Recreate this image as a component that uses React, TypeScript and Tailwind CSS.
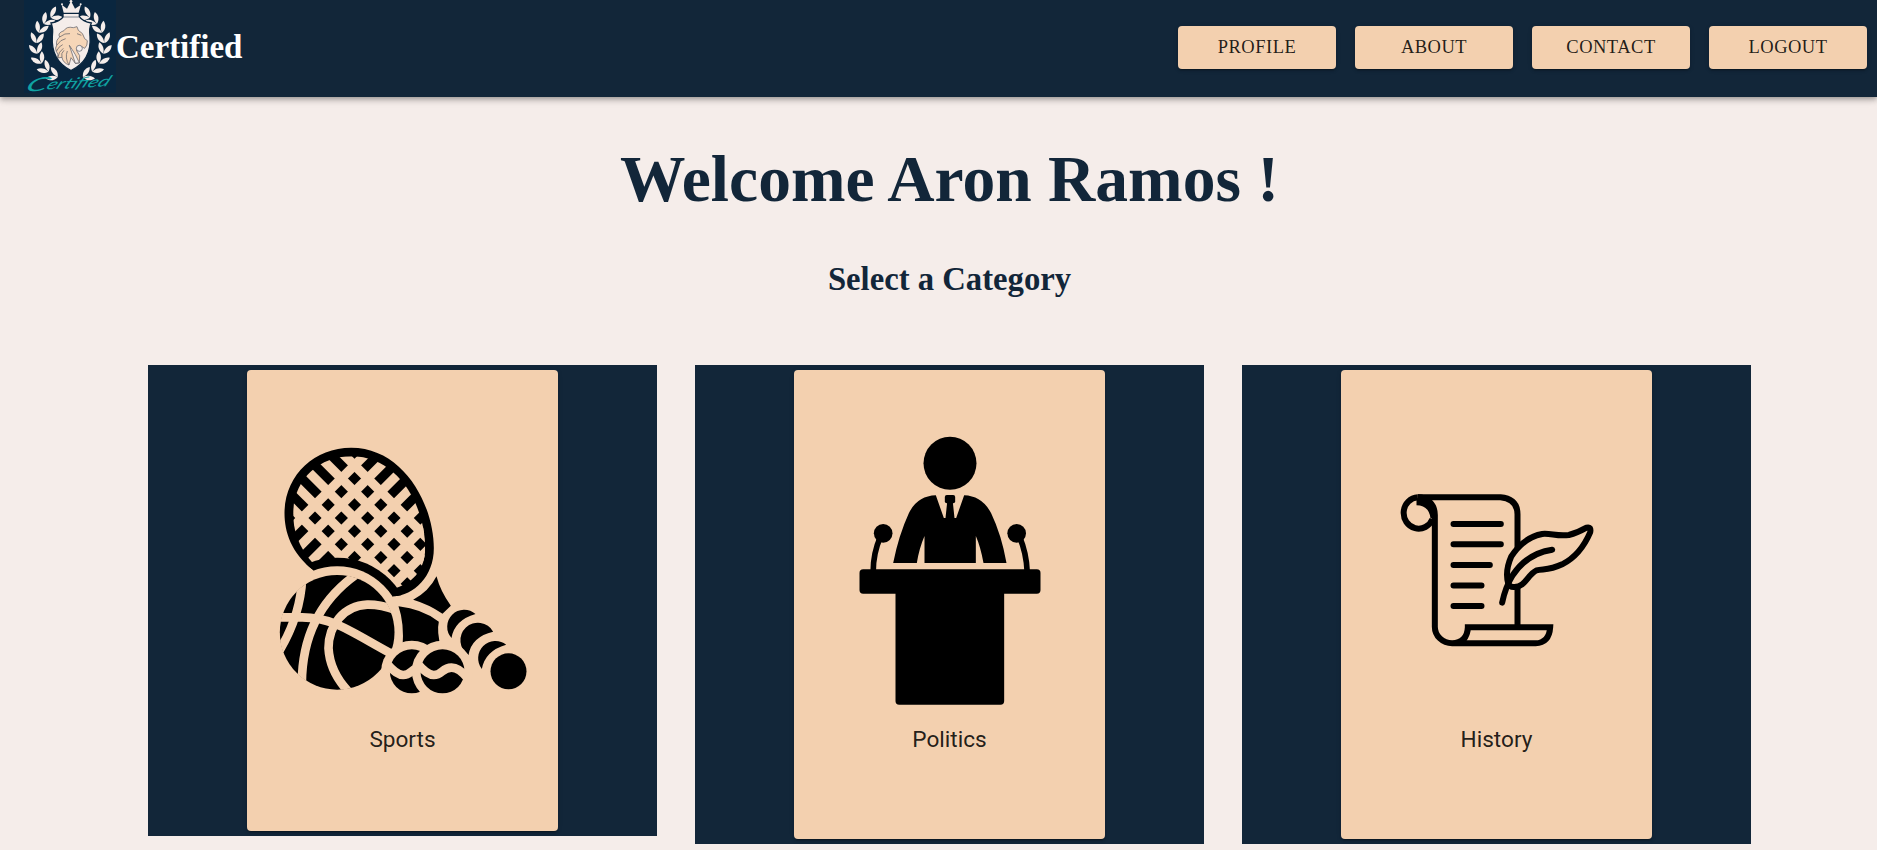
import React from "react";

const stations = [24, 42, 60, 78, 96, 114, 131, 147];

function Branch() {
  return (
    <g>
      {stations.map((a) => (
        <g key={a} transform={`rotate(${a} 151 136) translate(151 238) rotate(-90)`}>
          <path d="M0 4C-14 0 -22 -12 -19 -27C-6 -22 0 -10 0 4Z" />
          <path d="M0 4C14 0 22 -12 19 -27C6 -22 0 -10 0 4Z" />
        </g>
      ))}
    </g>
  );
}

function Logo() {
  return (
    <svg width="92" height="93" viewBox="12 0 276 279" className="shrink-0 overflow-visible">
      <rect x="12" width="276" height="279" fill="#0a263f" />
      <g fill="#f5edea">
        <Branch />
        <g transform="translate(302 0) scale(-1 1)">
          <Branch />
        </g>
        <path
          d="M130 50Q120 65 93 69Q100 82 97 110Q92 180 153 212Q216 180 210 110Q207 82 214 69Q188 65 178 50Z"
          stroke="#0a263f"
          strokeWidth="4"
        />
        <path d="M131 38L125 14L141 26L153 3L165 26L183 14L176 38ZM131 42H176V50H131Z" />
        <circle cx="153" cy="4" r="4" />
        <circle cx="126" cy="13" r="3" />
        <circle cx="182" cy="13" r="3" />
      </g>
      <g stroke="#55565f" strokeWidth="2" strokeLinejoin="round">
        <path
          d="M132 92Q140 78 160 83L171 80L175 91Q190 98 194 116L202 122Q203 137 194 145L180 137Q168 140 170 152L179 167L178 189L166 190L153 173L147 195Q128 188 126 172L113 174Q116 162 109 154Q104 144 110 136Q107 120 119 111Q111 99 132 92Z"
          fill="#f6d6b8"
        />
        <path d="M148 136L166 190L178 188L166 164L156 148Z" fill="#f5edea" />
        <circle cx="178" cy="145" r="9" fill="#f5edea" />
        <path
          d="M119 111Q135 98 150 101M110 136Q122 118 137 116M109 154Q116 139 128 134M113 174Q116 154 130 145M126 172Q122 160 132 151M147 195Q134 174 142 153M171 101L184 106"
          fill="none"
        />
      </g>
      <g
        transform="translate(12 275) rotate(-3) skewX(-30)"
        fill="#10a3a3"
        fontFamily="Lato, 'Liberation Sans', sans-serif"
        fontStyle="italic"
      >
        <text fontSize="56" textLength="64" lengthAdjust="spacingAndGlyphs">
          C
        </text>
        <text x="62" y="-3" fontSize="44" textLength="188" lengthAdjust="spacingAndGlyphs">
          ertified
        </text>
      </g>
    </svg>
  );
}

const fallingStrings = [343, 422, 501, 580, 659, 738, 817];
const risingStrings = [161, 82, 3, -76, -155];
const racketOutline =
  "M128 405C62 355 42 290 42 235C42 122 130 38 242 38C400 38 490 210 490 340C490 425 430 482 368 484L250 560Z";

function SportsIcon() {
  return (
    <svg width="270" height="290" viewBox="-7.500 -30 810 870" className="shrink-0">
      <defs>
        <clipPath id="racket-outer">
          <path d={racketOutline} />
        </clipPath>
        <clipPath id="racket-inner">
          <path d="M130 388C82 335 68 285 68 235C68 135 145 64 242 64C385 64 464 215 464 340C464 400 430 440 385 456L250 500Z" />
        </clipPath>
        <clipPath id="basketball">
          <circle cx="200" cy="592" r="173" />
        </clipPath>
      </defs>
      <path d={racketOutline} />
      <g clipPath="url(#racket-inner)" stroke="#f3d0af" strokeWidth="28">
        {fallingStrings.map((s) => (
          <line key={s} x1={s} y1="0" x2={s - 600} y2="600" />
        ))}
        {risingStrings.map((d) => (
          <line key={d} x1={d} y1="0" x2={d + 600} y2="600" />
        ))}
      </g>
      <circle cx="200" cy="592" r="224" clipPath="url(#racket-outer)" />
      <circle cx="200" cy="592" r="198" fill="#f3d0af" />
      <circle cx="200" cy="592" r="172" />
      <g clipPath="url(#basketball)" fill="none" stroke="#f3d0af" strokeWidth="26">
        <path d="M20 547H95C190 547 240 590 370 660" />
        <path d="M95 430Q90 540 28 645" />
        <path d="M255 420Q95 535 94 745" />
        <path d="M380 526Q330 508 290 509C220 512 174 570 174 640Q178 710 232 768" />
      </g>
      <path d="M498 424Q510 470 541 512L516 536Q475 508 428 494Q475 470 498 424Z" />
      <path d="M384 514Q455 522 505 560Q498 590 512 640H396Q402 565 384 514Z" />
      <path d="M615 537A51 51 0 0 0 543 609Q552 555 615 537Z" />
      <path d="M668 590A52.500 52.500 0 1 0 594 660Q603 605 668 590Z" />
      <path d="M707 629A52 52 0 0 0 634 702Q644 647 707 629Z" />
      <circle cx="714" cy="709" r="54" />
      {[424, 516].map((cx) => (
        <g key={cx} transform={`translate(${cx - 516} 0)`}>
          <circle cx="516" cy="709" r="92" fill="#f3d0af" />
          <circle cx="516" cy="709" r="66" />
          <path
            d="M441 686Q470 720 490 720C515 720 515 698 543 698Q565 698 590 728"
            fill="none"
            stroke="#f3d0af"
            strokeWidth="26"
          />
        </g>
      ))}
    </svg>
  );
}

function PoliticsIcon() {
  return (
    <svg width="270" height="290" viewBox="-76.500 0 810 870" className="shrink-0">
      <circle cx="328.500" cy="115" r="79.500" />
      <path d="M158 414Q175 330 205 265Q230 213 286 211L310 279H315L320 232H337L342 279H347L371 211Q425 213 452 265Q483 330 498 414H429Q420 365 406 333V414H252V333Q236 370 229 414Z" />
      <rect x="313" y="210" width="31" height="25" rx="6" />
      <circle cx="128" cy="325" r="28" />
      <circle cx="528.500" cy="325" r="28" />
      <path d="M98 440Q98 385 120 335M560 440Q558 385 537 335" fill="none" stroke="#000" strokeWidth="17" />
      <rect x="57" y="433" width="543" height="73" rx="11" />
      <rect x="165" y="480" width="326" height="359" rx="11" />
    </svg>
  );
}

function HistoryIcon() {
  return (
    <svg
      width="270"
      height="290"
      viewBox="-55.500 -150 810 870"
      className="shrink-0"
      fill="none"
      stroke="#000"
      strokeWidth="18"
    >
      <path d="M112 67H360Q411 72 411 118V222M411 338V450" />
      <path d="M112 67C140 67 163 88 163 120V455A52 50 0 0 0 215 505H465Q506 503 509 457H253M262 457Q260 503 215 505" />
      <path d="M156 132A45 47 0 1 1 112 67" />
      <path d="M108 70H145L162 130H150Q146 92 108 91Z" fill="#000" stroke="none" />
      <path d="M258 470L270 466Q264 488 252 498L235 500Z" fill="#000" stroke="none" />
      <path
        d="M219 147H361M219 208H361M219 270H328M219 331.500H303M219 393H303"
        strokeLinecap="round"
      />
      <path
        d="M384 330Q372 290 392 245Q430 187 485 177C510 174 530 185 565 180Q590 174 618 158Q633 154 629 172Q600 240 545 268C505 287 490 281 468 286C440 300 435 335 402 336Q388 337 384 328Z"
        strokeLinejoin="round"
      />
      <path d="M365 383Q375 335 397 300Q440 235 515 224" strokeLinecap="round" />
    </svg>
  );
}

const links = ["PROFILE", "ABOUT", "CONTACT", "LOGOUT"];

function CategoryCard({ title, height, children }: { title: string; height: string; children: React.ReactNode }) {
  return (
    <section className="flex w-[509px] justify-center bg-[#122639] py-[5px]">
      <button
        className={`flex w-[311px] flex-col items-center rounded bg-[#f3d0af] pt-[55px] shadow-[0_3px_1px_-2px_rgba(0,0,0,0.2),0_2px_2px_rgba(0,0,0,0.14),0_1px_5px_rgba(0,0,0,0.12)] ${height}`}
      >
        {children}
        <span className="font-[Roboto,sans-serif] text-[22.6px] leading-[50px] text-black/87">{title}</span>
      </button>
    </section>
  );
}

export default function App() {
  return (
    <div className="h-[850px] w-full overflow-hidden bg-[#f5edea] font-['Liberation_Serif',serif]">
      <header className="flex h-[97px] items-start bg-[#122639] pr-[10px] pl-6 text-white shadow-[0_2px_4px_-1px_rgba(0,0,0,0.2),0_4px_5px_rgba(0,0,0,0.14),0_1px_10px_rgba(0,0,0,0.12)]">
        <Logo />
        <span className="text-[33px] leading-[94px] font-bold">Certified</span>
        <nav className="ml-auto flex gap-[19px] pt-[26px]">
          {links.map((label) => (
            <button
              key={label}
              className="h-[43px] w-[158px] rounded bg-[#f3d0af] text-[18.5px] tracking-[0.5px] text-black/87 shadow-[0_3px_1px_-2px_rgba(0,0,0,0.2),0_2px_2px_rgba(0,0,0,0.14),0_1px_5px_rgba(0,0,0,0.12)]"
            >
              {label}
            </button>
          ))}
        </nav>
      </header>
      <main className="ml-[148px] w-[1603px] text-center text-[#122639]">
        <h1 className="text-[65.5px] leading-[164px] font-bold">Welcome Aron Ramos !</h1>
        <h2 className="text-[32.7px] leading-9 font-bold">Select a Category</h2>
        <div className="mt-[68px] flex items-start gap-[38px]">
          <CategoryCard title="Sports" height="h-[461px]">
            <SportsIcon />
          </CategoryCard>
          <CategoryCard title="Politics" height="h-[469px]">
            <PoliticsIcon />
          </CategoryCard>
          <CategoryCard title="History" height="h-[469px]">
            <HistoryIcon />
          </CategoryCard>
        </div>
      </main>
    </div>
  );
}
